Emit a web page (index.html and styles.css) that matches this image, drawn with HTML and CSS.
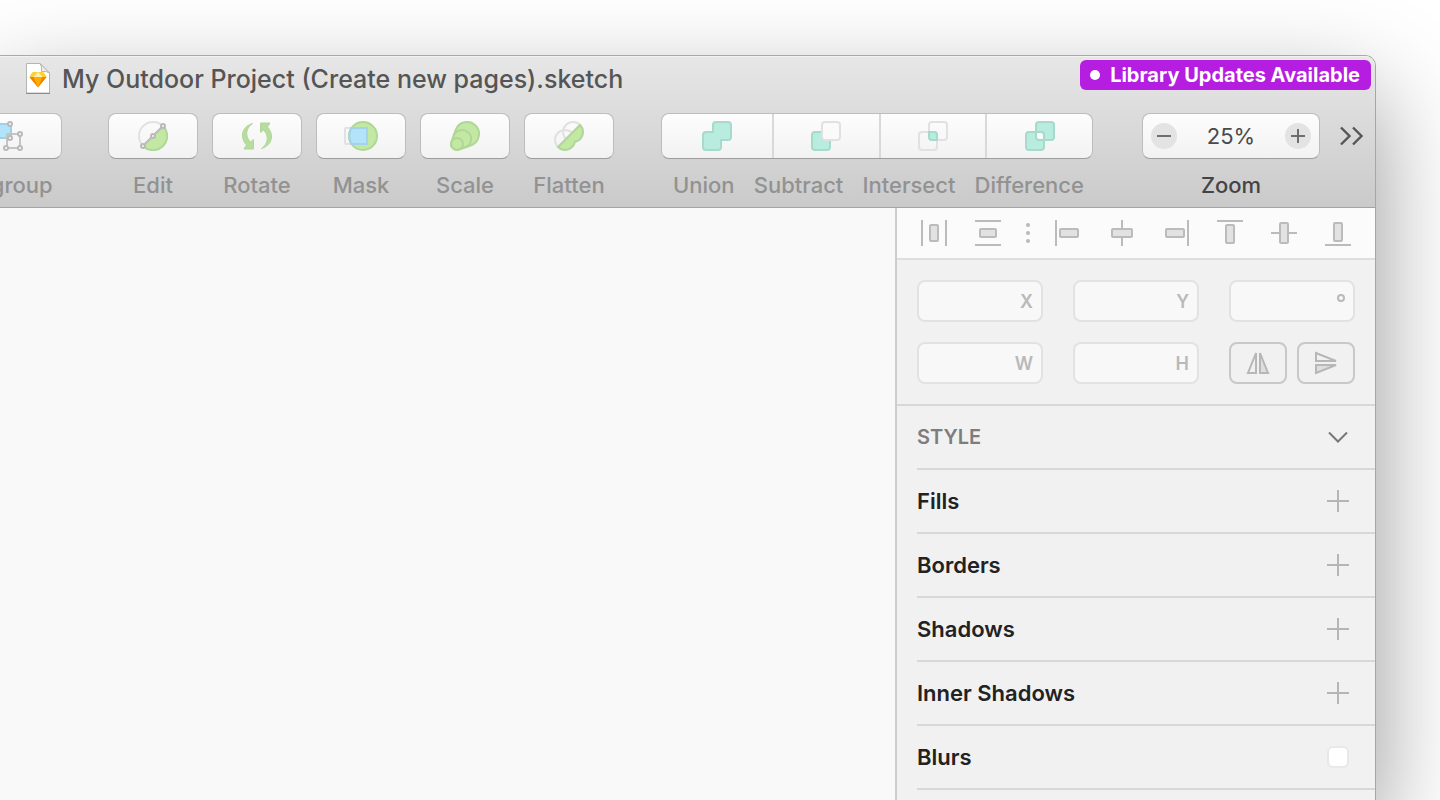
FILE: index.html
```html
<!DOCTYPE html>
<html lang="en">
<head>
<meta charset="utf-8">
<title>My Outdoor Project (Create new pages).sketch</title>
<link rel="stylesheet" href="styles.css">
</head>
<body>
<div class="window">
  <header class="chrome">
    <div class="titlebar">
      <svg class="doc-icon" width="26" height="32" viewBox="0 0 26 32" aria-hidden="true">
        <path d="M1.500 .5H15L24.500 10V30H1.500Z" fill="#fff" stroke="#b4b4b4"/>
        <path d="M1 30.500H25" stroke="#8c8c8c"/>
        <path d="M15 .5Q17 3 16.500 8.500Q22 8 24.500 10Z" fill="#ececec" stroke="#b5b5b5"/>
        <path d="M7.500 9.500 13 9 18.500 9.500 21.500 14 13 24.500 4.500 14Z" fill="#fdad00"/>
        <path d="M7.500 9.500 13 9 18.500 9.500 21.500 14H4.500Z" fill="#fdd231"/>
        <path d="M13 9 17.500 14H8.500Z" fill="#feeeb7"/>
        <path d="M4.500 14H8.500L13 24.500ZM21.500 14H17.500L13 24.500Z" fill="#f08200"/>
      </svg>
      <h1 class="title">My Outdoor Project (Create new pages).sketch</h1>
      <button class="badge"><span class="dot"></span>Library Updates Available</button>
    </div>
    <div class="toolbar">
      <button class="tool tool-group">
        <span class="face">
          <svg width="32" height="30" viewBox="0 0 32 30">
            <path d="M2 3H20V17H2Z" fill="#b3e2fb" stroke="#9fd0ea" stroke-width="2"/>
            <path d="M16 13H29V27H16Z" fill="none" stroke="#c4c4c4" stroke-width="2"/>
            <g fill="#fff" stroke="#b9b9b9" stroke-width="2"><circle cx="19" cy="3" r="2"/><circle cx="19" cy="17" r="2"/><circle cx="29" cy="13" r="2"/><circle cx="15" cy="27" r="2"/><circle cx="29" cy="27" r="2"/></g>
          </svg>
        </span>
        <span class="label">Ungroup</span>
      </button>
      <div class="tools">
        <button class="tool">
          <span class="face">
            <svg width="30" height="30" viewBox="0 0 30 30">
              <circle cx="15" cy="15" r="14" fill="none" stroke="#e1e1e1" stroke-width="2"/>
              <path d="M25 5A14 14 0 0 1 5 25Z" fill="#c2e8a4" stroke="#b0d796" stroke-width="2"/>
              <path d="M25 5 5 25" stroke="#bdbdbd" stroke-width="2"/>
              <g fill="#f6f6f6" stroke="#b9b9b9" stroke-width="2"><circle cx="25" cy="5" r="2"/><circle cx="15" cy="15" r="2"/><circle cx="5" cy="25" r="2"/></g>
            </svg>
          </span>
          <span class="label">Edit</span>
        </button>
        <button class="tool">
          <span class="face">
            <svg width="32" height="30" viewBox="-1 0 32 30" fill="#b7dd9e" stroke="#b0d796" stroke-width="1">
              <path d="M10.500 2.500C-1 6-2 17 4.500 24L2 28H11.500V18.500L8.500 21C2.500 15 4 7 10.500 2.500Z"/>
              <path d="M19.500 27.500C31 24 32 13 25.500 6L28 2H18.500V11.500L21.500 9C27.500 15 26 23 19.500 27.500Z"/>
            </svg>
          </span>
          <span class="label">Rotate</span>
        </button>
        <button class="tool">
          <span class="face">
            <svg width="34" height="30" viewBox="0 0 34 30">
              <rect x="1" y="7" width="22" height="16" rx="1" fill="none" stroke="#e1e1e1" stroke-width="2"/>
              <circle cx="19" cy="15" r="14" fill="#c2e8a4" stroke="#b0d796" stroke-width="2"/>
              <path d="M7.500 7H23V23H7.500Q3 15 7.500 7Z" fill="#b3e2fb" stroke="#a3d3e6" stroke-width="2"/>
            </svg>
          </span>
          <span class="label">Mask</span>
        </button>
        <button class="tool">
          <span class="face">
            <svg width="30" height="30" viewBox="0 0 30 30" stroke="#b0d796" stroke-width="2">
              <path d="M5.700 8.900A12 12 0 1 1 21.100 24.300L9 28.600A6 6 0 0 1 1.400 21Z" fill="#c2e8a4"/>
              <path d="M3.500 15.500A9 9 0 1 1 15 26.500" fill="none"/>
              <circle cx="7" cy="23" r="6" fill="none"/>
            </svg>
          </span>
          <span class="label">Scale</span>
        </button>
        <button class="tool">
          <span class="face">
            <svg width="30" height="30" viewBox="0 0 30 30" stroke-width="2">
              <g fill="none" stroke="#e1e1e1"><circle cx="19" cy="11" r="10"/><circle cx="11" cy="19" r="10"/></g>
              <path d="M26 4A10 10 0 0 1 20.800 20.800A10 10 0 0 1 4 26Z" fill="#c2e8a4" stroke="#b0d796"/>
            </svg>
          </span>
          <span class="label">Flatten</span>
        </button>
      </div>
      <div class="boolean">
        <div class="segments">
          <button class="segment" aria-labelledby="l-union">
            <svg width="30" height="30" viewBox="0 0 30 30"><path d="M14 1H26Q29 1 29 4V16Q29 19 26 19H19V26Q19 29 16 29H4Q1 29 1 26V14Q1 11 4 11H11V4Q11 1 14 1Z" fill="#b8ecdf" stroke="#a7dacb" stroke-width="2"/></svg>
          </button>
          <button class="segment" aria-labelledby="l-subtract">
            <svg width="30" height="30" viewBox="0 0 30 30" stroke-width="2"><path d="M11 11H4Q1 11 1 14V26Q1 29 4 29H16Q19 29 19 26V19H14Q11 19 11 16Z" fill="#b8ecdf" stroke="#a7dacb"/><rect x="11" y="1" width="18" height="18" rx="3" fill="#fafafa" stroke="#e1e1e1"/></svg>
          </button>
          <button class="segment" aria-labelledby="l-intersect">
            <svg width="30" height="30" viewBox="0 0 30 30" stroke-width="2"><g fill="none" stroke="#e1e1e1"><rect x="11" y="1" width="18" height="18" rx="3"/><rect x="1" y="11" width="18" height="18" rx="3"/></g><path d="M11 11H16Q19 11 19 14V19H14Q11 19 11 16Z" fill="#b8ecdf" stroke="#a7dacb"/></svg>
          </button>
          <button class="segment" aria-labelledby="l-difference">
            <svg width="30" height="30" viewBox="0 0 30 30" fill="#b8ecdf" stroke="#a7dacb" stroke-width="2"><rect x="11" y="1" width="18" height="18" rx="3"/><rect x="1" y="11" width="18" height="18" rx="3"/><path d="M11 11H16Q19 11 19 14V19H14Q11 19 11 16Z" fill="#fafafa"/></svg>
          </button>
        </div>
        <div class="segment-labels">
          <span class="label" id="l-union">Union</span>
          <span class="label" id="l-subtract">Subtract</span>
          <span class="label" id="l-intersect">Intersect</span>
          <span class="label" id="l-difference">Difference</span>
        </div>
      </div>
      <div class="zoom" role="group" aria-labelledby="l-zoom">
        <div class="face">
          <button class="round" aria-label="Zoom out"><svg width="14" height="14" viewBox="0 0 14 14"><path d="M0 7H14" stroke="#6e6e6e" stroke-width="2"/></svg></button>
          <output class="zoom-value">25%</output>
          <button class="round" aria-label="Zoom in"><svg width="14" height="14" viewBox="0 0 14 14"><path d="M0 7H14M7 0V14" stroke="#6e6e6e" stroke-width="2"/></svg></button>
        </div>
        <span class="label label-dark" id="l-zoom">Zoom</span>
      </div>
      <button class="more" aria-label="More tools">
        <svg width="24" height="20" viewBox="0 0 24 20" fill="none" stroke="#565656" stroke-width="2.400"><path d="M2 1.500 10.500 10 2 18.500M14 1.500 22.500 10 14 18.500"/></svg>
      </button>
    </div>
  </header>
  <div class="content">
    <main class="canvas"></main>
    <aside class="inspector">
      <div class="align">
        <button aria-label="Distribute horizontally"><svg class="glyph" viewBox="0 0 28 28"><path d="M2 1V27M26 1V27"/><rect x="10" y="6" width="8" height="16" rx="1"/></svg></button>
        <button aria-label="Distribute vertically"><svg class="glyph" viewBox="0 0 28 28"><path d="M1 2H27M1 26H27"/><rect x="6" y="10" width="16" height="8" rx="1"/></svg></button>
        <svg class="dots" width="4" height="20" viewBox="0 0 4 20" aria-hidden="true"><circle cx="2" cy="2" r="2"/><circle cx="2" cy="10" r="2"/><circle cx="2" cy="18" r="2"/></svg>
        <button aria-label="Align left"><svg class="glyph" viewBox="0 0 28 28"><path d="M2 1V27"/><rect x="6" y="10" width="18" height="8" rx="1"/></svg></button>
        <button aria-label="Align center"><svg class="glyph" viewBox="0 0 28 28"><path d="M14 1V27"/><rect x="4" y="10" width="20" height="8" rx="1"/></svg></button>
        <button aria-label="Align right"><svg class="glyph" viewBox="0 0 28 28"><path d="M26 1V27"/><rect x="4" y="10" width="18" height="8" rx="1"/></svg></button>
        <button aria-label="Align top"><svg class="glyph" viewBox="0 0 28 28"><path d="M1 2H27"/><rect x="10" y="6" width="8" height="18" rx="1"/></svg></button>
        <button aria-label="Align middle"><svg class="glyph" viewBox="0 0 28 28"><path d="M1 14H27"/><rect x="10" y="4" width="8" height="20" rx="1"/></svg></button>
        <button aria-label="Align bottom"><svg class="glyph" viewBox="0 0 28 28"><path d="M1 26H27"/><rect x="10" y="4" width="8" height="18" rx="1"/></svg></button>
      </div>
      <div class="geometry">
        <label class="field"><input type="text" disabled><span>X</span></label>
        <label class="field"><input type="text" disabled><span>Y</span></label>
        <label class="field"><input type="text" aria-label="Rotation" disabled><svg width="8" height="22" viewBox="0 0 8 22" aria-hidden="true"><circle cx="4" cy="8" r="3" fill="none" stroke="#b9b9b9" stroke-width="2"/></svg></label>
        <label class="field"><input type="text" disabled><span>W</span></label>
        <label class="field"><input type="text" disabled><span>H</span></label>
        <div class="flips">
          <button class="flip" aria-label="Flip horizontally"><svg width="24" height="24" viewBox="0 0 24 24" fill="none" stroke="#b7b7b7" stroke-width="2"><path d="M10 2V22H2Z"/><path d="M14 2V22H22Z" fill="#dedede"/></svg></button>
          <button class="flip" aria-label="Flip vertically"><svg width="24" height="24" viewBox="0 0 24 24" fill="none" stroke="#b7b7b7" stroke-width="2"><path d="M2 10H22L2 2Z"/><path d="M2 14H22L2 22Z" fill="#dedede"/></svg></button>
        </div>
      </div>
      <section class="styles">
        <div class="row"><h2 class="caption">STYLE</h2><button class="action" aria-label="Collapse style"><svg width="22" height="22" viewBox="0 0 22 22"><path d="M2 6.500 11 15.500 20 6.500" fill="none" stroke="#777" stroke-width="2"/></svg></button></div>
        <div class="row"><h3 class="name">Fills</h3><button class="action" aria-label="Add fill"><svg width="22" height="22" viewBox="0 0 22 22"><path d="M0 11H22M11 0V22" stroke="#b5b5b5" stroke-width="2"/></svg></button></div>
        <div class="row"><h3 class="name">Borders</h3><button class="action" aria-label="Add border"><svg width="22" height="22" viewBox="0 0 22 22"><path d="M0 11H22M11 0V22" stroke="#b5b5b5" stroke-width="2"/></svg></button></div>
        <div class="row"><h3 class="name">Shadows</h3><button class="action" aria-label="Add shadow"><svg width="22" height="22" viewBox="0 0 22 22"><path d="M0 11H22M11 0V22" stroke="#b5b5b5" stroke-width="2"/></svg></button></div>
        <div class="row"><h3 class="name">Inner Shadows</h3><button class="action" aria-label="Add inner shadow"><svg width="22" height="22" viewBox="0 0 22 22"><path d="M0 11H22M11 0V22" stroke="#b5b5b5" stroke-width="2"/></svg></button></div>
        <div class="row"><label class="name" for="blurs">Blurs</label><input class="check" type="checkbox" id="blurs"></div>
      </section>
    </aside>
  </div>
</div>
</body>
</html>
```

FILE: styles.css
```css
* { box-sizing: border-box; }

body {
  margin: 0;
  height: 100vh;
  overflow: hidden;
  background: #fff;
  font-family: Inter, "Liberation Sans", sans-serif;
  font-size: 22px;
  display: flex;
  flex-direction: column;
  padding: 55px 64px 0 0;
}

button {
  border: 0;
  padding: 0;
  margin: 0;
  background: none;
  font: inherit;
  color: inherit;
}

svg { display: block; flex: none; }

.window {
  flex: 1;
  display: flex;
  flex-direction: column;
  min-height: 0;
  border-top: 1px solid #a9a9a9;
  border-right: 1px solid #a6a6a6;
  border-top-right-radius: 11px;
  box-shadow: 0 40px 100px rgba(0, 0, 0, 0.42);
}

.chrome {
  flex: none;
  overflow: hidden;
  border-top-right-radius: 10px;
  background: linear-gradient(#e7e7e7, #cacaca);
  border-bottom: 1px solid #a3a3a3;
  box-shadow: inset 0 1px #f3f3f3;
}

.titlebar {
  display: flex;
  align-items: center;
  height: 46px;
  padding: 0 4px 0 25px;
}

.title {
  margin: 0 0 0 11px;
  font-size: 25px;
  font-weight: 500;
  line-height: 32px;
  color: #555;
  white-space: nowrap;
}

.badge {
  display: flex;
  align-items: center;
  align-self: flex-start;
  gap: 10px;
  height: 30px;
  margin: 4px 0 0 auto;
  padding: 0 11px 0 10px;
  border-radius: 6px;
  background: #b51ee0;
  color: #fff;
  font-size: 20px;
  font-weight: 700;
  white-space: nowrap;
}

.dot {
  width: 10px;
  height: 10px;
  border-radius: 50%;
  background: #fff;
}

.toolbar {
  display: flex;
  justify-content: flex-end;
  padding: 11px 12px 9px 0;
}

.tools {
  display: flex;
  gap: 14px;
  margin: 0 47px 0 46px;
}

.tool {
  flex: none;
  display: flex;
  flex-direction: column;
  align-items: center;
  width: 90px;
}

.tool-group { width: 110px; }

.face,
.segments {
  display: flex;
  align-items: center;
  justify-content: center;
  width: 100%;
  height: 46px;
  border: 1px solid #bdbdbd;
  border-bottom-color: #9d9d9d;
  border-radius: 8px;
  background: linear-gradient(#fdfdfd, #f2f2f2);
}

.label {
  margin-top: 13px;
  line-height: 26px;
  font-weight: 500;
  color: #929292;
  white-space: nowrap;
}

.label-dark { color: #444; }

.boolean {
  flex: none;
  width: 432px;
  margin-right: 49px;
}

.segment {
  flex: 1;
  height: 100%;
  display: flex;
  align-items: center;
  justify-content: center;
}

.segment:first-child { flex: none; width: 110px; }

.segment + .segment { border-left: 2px solid #d9d9d9; }

.segment-labels {
  display: flex;
  justify-content: space-between;
  padding: 0 9px 0 12px;
}

.zoom {
  flex: none;
  display: flex;
  flex-direction: column;
  align-items: center;
  width: 178px;
  margin-right: 19px;
}

.zoom .face {
  justify-content: space-between;
  padding: 0 8px;
}

.round {
  display: flex;
  align-items: center;
  justify-content: center;
  width: 26px;
  height: 26px;
  border-radius: 50%;
  background: #e3e3e3;
}

.zoom-value { color: #4a4a4a; }

.more {
  display: flex;
  align-items: center;
  height: 46px;
}

.content {
  flex: 1;
  min-height: 0;
  display: flex;
}

.canvas {
  flex: 1;
  background: #f9f9f9;
}

.inspector {
  flex: none;
  width: 480px;
  overflow: hidden;
  border-left: 2px solid #cdcdcd;
  background: #f1f1f1;
}

.align {
  display: grid;
  grid-template-columns: 54px 54px 26px repeat(6, 54px);
  place-items: center;
  height: 52px;
  padding: 0 10px;
  border-bottom: 2px solid #dedede;
  background: #fbfbfb;
}

.glyph {
  width: 28px;
  height: 28px;
  fill: #e2e2e2;
  stroke: #bbb;
  stroke-width: 2px;
}

.dots { fill: #b9b9b9; }

.geometry {
  display: grid;
  grid-template-columns: repeat(3, minmax(0, 1fr));
  gap: 20px 30px;
  padding: 20px;
  border-bottom: 2px solid #d8d8d8;
}

.field {
  display: flex;
  align-items: center;
  height: 42px;
  padding: 0 8px;
  border: 2px solid #e2e2e2;
  border-radius: 8px;
  background: #f8f8f8;
  color: #b9b9b9;
  font-size: 18px;
  font-weight: 600;
}

.field input {
  flex: 1;
  width: 100%;
  min-width: 0;
  border: 0;
  padding: 0;
  background: none;
  font: inherit;
}

.flips {
  display: grid;
  grid-template-columns: 1fr 1fr;
  gap: 10px;
}

.flip {
  display: flex;
  align-items: center;
  justify-content: center;
  height: 42px;
  border: 2px solid #c8c8c8;
  border-radius: 8px;
}

.styles { padding-left: 20px; }

.row {
  display: flex;
  align-items: center;
  justify-content: space-between;
  height: 64px;
  padding-right: 26px;
  border-bottom: 2px solid #d8d8d8;
}

.caption {
  margin: 0;
  font-size: 20px;
  font-weight: 600;
  color: #7d7d7d;
}

.name {
  margin: 0;
  font-size: 22px;
  font-weight: 600;
  color: #222;
}

.check {
  appearance: none;
  width: 22px;
  height: 22px;
  margin: 0;
  border: 2px solid #e8e8e8;
  border-radius: 6px;
  background: #fff;
}
```
